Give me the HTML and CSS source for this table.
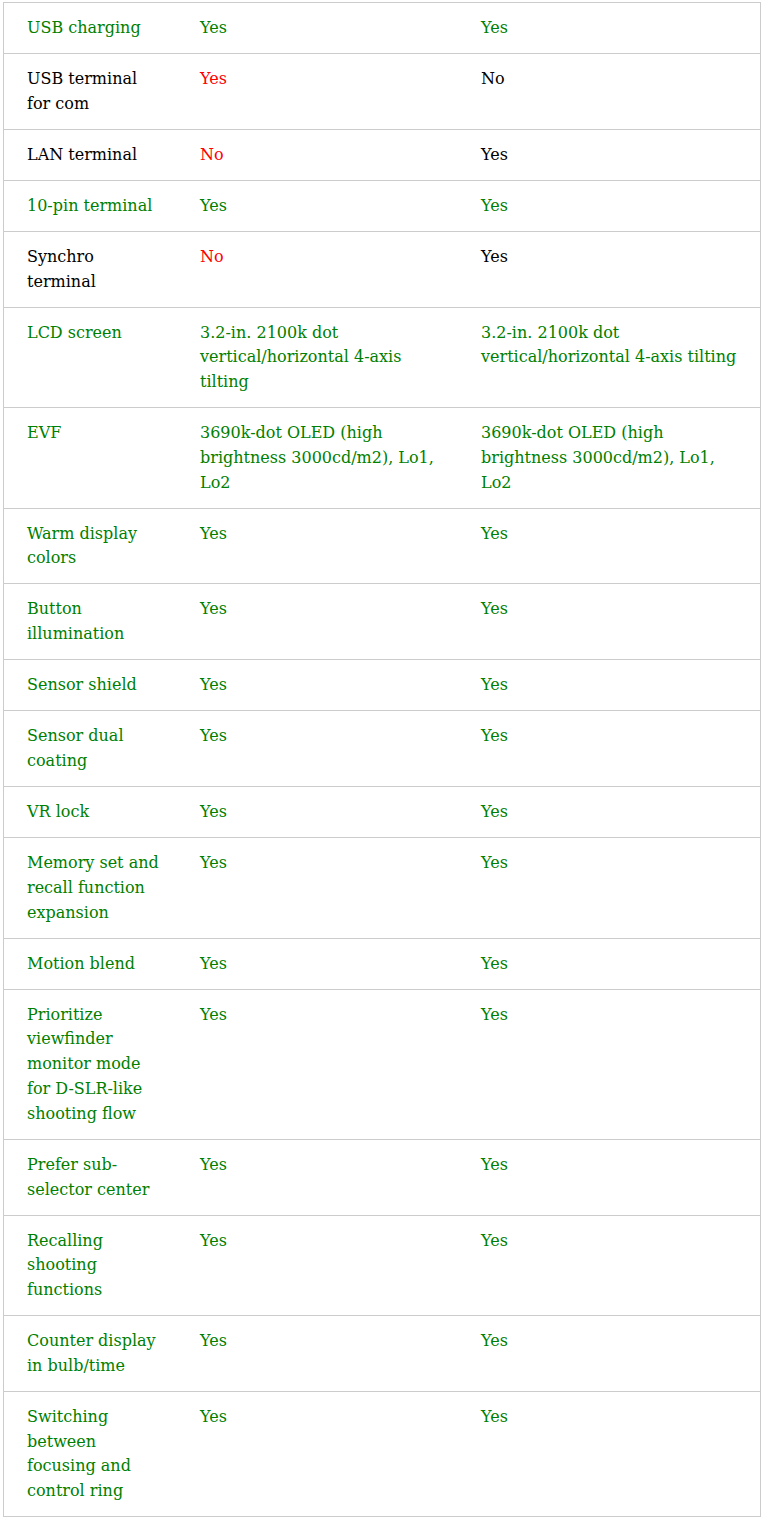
FILE: index.html
```html
<!DOCTYPE html>
<html lang="en">
<head>
<meta charset="utf-8">
<title>Camera comparison</title>
<link rel="stylesheet" href="styles.css">
</head>
<body>
<table class="spec">
  <colgroup><col class="c1"><col class="c2"><col class="c3"></colgroup>
  <tbody>
    <tr class="ok"><td>USB charging</td><td>Yes</td><td>Yes</td></tr>
    <tr class="plain"><td>USB terminal<br>for com</td><td class="bad">Yes</td><td>No</td></tr>
    <tr class="plain"><td>LAN terminal</td><td class="bad">No</td><td>Yes</td></tr>
    <tr class="ok"><td>10-pin terminal</td><td>Yes</td><td>Yes</td></tr>
    <tr class="plain"><td>Synchro<br>terminal</td><td class="bad">No</td><td>Yes</td></tr>
    <tr class="ok"><td>LCD screen</td><td>3.2-in. 2100k dot<br>vertical/horizontal 4-axis<br>tilting</td><td>3.2-in. 2100k dot<br>vertical/horizontal 4-axis tilting</td></tr>
    <tr class="ok"><td>EVF</td><td>3690k-dot OLED (high<br>brightness 3000cd/m2), Lo1,<br>Lo2</td><td>3690k-dot OLED (high<br>brightness 3000cd/m2), Lo1,<br>Lo2</td></tr>
    <tr class="ok"><td>Warm display<br>colors</td><td>Yes</td><td>Yes</td></tr>
    <tr class="ok"><td>Button<br>illumination</td><td>Yes</td><td>Yes</td></tr>
    <tr class="ok"><td>Sensor shield</td><td>Yes</td><td>Yes</td></tr>
    <tr class="ok"><td>Sensor dual<br>coating</td><td>Yes</td><td>Yes</td></tr>
    <tr class="ok"><td>VR lock</td><td>Yes</td><td>Yes</td></tr>
    <tr class="ok"><td>Memory set and<br>recall function<br>expansion</td><td>Yes</td><td>Yes</td></tr>
    <tr class="ok"><td>Motion blend</td><td>Yes</td><td>Yes</td></tr>
    <tr class="ok"><td>Prioritize<br>viewfinder<br>monitor mode<br>for D-SLR-like<br>shooting flow</td><td>Yes</td><td>Yes</td></tr>
    <tr class="ok"><td>Prefer sub-<br>selector center</td><td>Yes</td><td>Yes</td></tr>
    <tr class="ok"><td>Recalling<br>shooting<br>functions</td><td>Yes</td><td>Yes</td></tr>
    <tr class="ok"><td>Counter display<br>in bulb/time</td><td>Yes</td><td>Yes</td></tr>
    <tr class="ok"><td>Switching<br>between<br>focusing and<br>control ring</td><td>Yes</td><td>Yes</td></tr>
  </tbody>
</table>
</body>
</html>
```

FILE: styles.css
```css
html, body {
  margin: 0;
  padding: 0;
  background: #ffffff;
}

body {
  padding: 2px 0 0 3px;
  font-family: "DejaVu Serif", "Liberation Serif", serif;
  font-size: 16px;
  line-height: 24.8px;
}

.spec {
  width: 758px;
  table-layout: fixed;
  border-collapse: separate;
  border-spacing: 0;
  border-top: 1px solid #cccccc;
  border-left: 1px solid #cccccc;
  border-right: 1px solid #cccccc;
}

.c1 { width: 173px; }
.c2 { width: 281px; }
.c3 { width: 302px; }

.spec td {
  padding: 13px 6px 12.2px 23px;
  border-bottom: 1px solid #cccccc;
  vertical-align: top;
  white-space: nowrap;
  text-align: left;
}

.ok td { color: #008000; }
.plain td { color: #000000; }
.spec td.bad { color: #ff0000; }
```
